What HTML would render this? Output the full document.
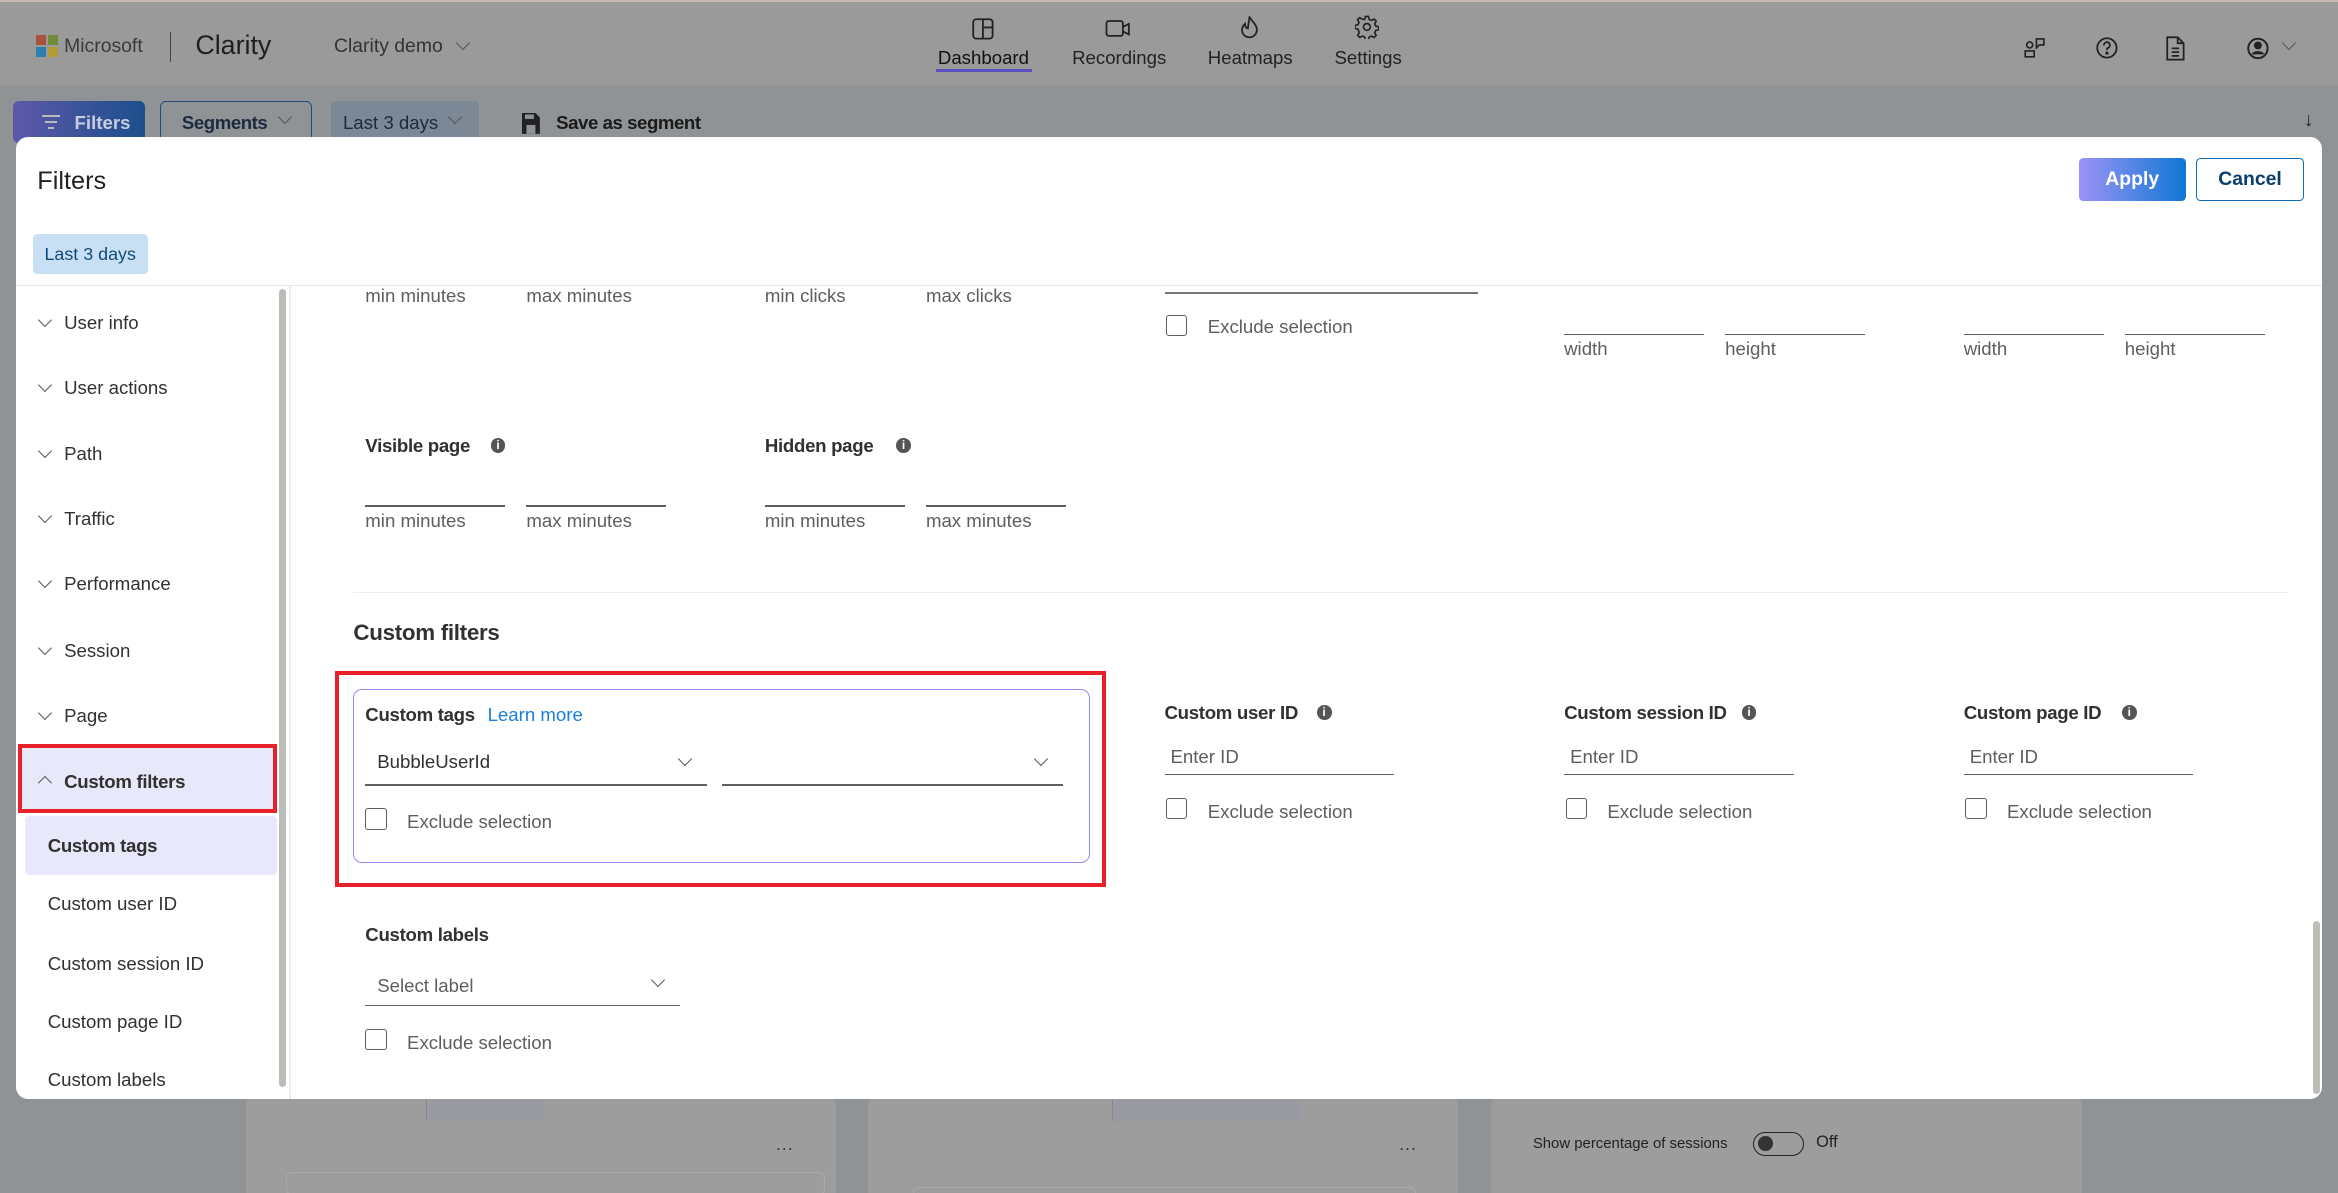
<!DOCTYPE html>
<html><head><meta charset="utf-8">
<style>
html,body{margin:0;padding:0;overflow:hidden;}
body{width:1568px;height:800px;zoom:1.49107;font-family:"Liberation Sans",sans-serif;background:#8f9396;position:relative;color:#323130;}
.a{position:absolute;white-space:nowrap;}
.hdr{position:absolute;left:0;top:0;width:1568px;height:57px;background:#9a9a9a;border-top:2px solid #c9b9b2;box-sizing:border-box;}
.modal{position:absolute;left:11px;top:92px;width:1546px;height:645px;background:#fff;border-radius:8px;overflow:hidden;}
.lbl{font-size:12.5px;color:#605e5c;}
.ul{position:absolute;height:1px;background:#605e5c;}
.cb{position:absolute;width:13px;height:13px;border:1px solid #605e5c;border-radius:2px;background:#fff;}
.b{font-weight:bold;font-size:12.5px;color:#323130;letter-spacing:-0.2px;}
.info{display:inline-block;width:10px;height:10px;border-radius:50%;background:#555;color:#fff;font-size:8px;text-align:center;line-height:10px;font-weight:bold;vertical-align:1px;}
.chev{position:absolute;width:6px;height:6px;border-right:1px solid #555;border-bottom:1px solid #555;transform:rotate(45deg);}
.side{font-size:12.5px;color:#323130;}
.card{position:absolute;background:#9d9d9d;border-radius:6px;}
</style></head><body>
<div class="hdr">
  <div class="a" style="left:24px;top:22px;width:7px;height:7px;background:#a8523c"></div>
  <div class="a" style="left:32px;top:22px;width:7px;height:7px;background:#6f8a3a"></div>
  <div class="a" style="left:24px;top:30px;width:7px;height:7px;background:#2e7fb0"></div>
  <div class="a" style="left:32px;top:30px;width:7px;height:7px;background:#b29a36"></div>
  <div class="a" style="left:43px;top:22px;font-size:13px;color:#3a3a3a">Microsoft</div>
  <div class="a" style="left:114px;top:20px;width:1px;height:20px;background:#444"></div>
  <div class="a" style="left:131px;top:19px;font-size:18px;color:#1f1f1f">Clarity</div>
  <div class="a" style="left:224px;top:22px;font-size:13px;color:#333">Clarity demo</div>
  <div class="chev" style="left:307px;top:24px"></div>
  <svg class="a" style="left:651px;top:10px" width="16" height="16" viewBox="0 0 16 16" fill="none" stroke="#222" stroke-width="1.2"><rect x="1.5" y="1.5" width="13" height="13" rx="2"/><path d="M8 1.5v13M8 7h6.5"/></svg>
  <div class="a" style="left:629px;top:30px;font-size:12.5px;color:#111">Dashboard</div>
  <div class="a" style="left:628px;top:45px;width:64px;height:2px;background:#5b4ec0"></div>
  <svg class="a" style="left:741px;top:11px" width="18" height="14" viewBox="0 0 18 14" fill="none" stroke="#222" stroke-width="1.2"><rect x="1" y="2" width="11" height="10" rx="1.5"/><path d="M12 6l4-2v7l-4-2"/></svg>
  <div class="a" style="left:719px;top:30px;font-size:12.5px;color:#222">Recordings</div>
  <svg class="a" style="left:831px;top:9px" width="14" height="16" viewBox="0 0 14 16" fill="none" stroke="#222" stroke-width="1.2"><path d="M7 1c1 3 5 5 5 9a5 5 0 0 1-10 0c0-2 1-3 2-4 0 2 1 3 2 3 0-3 1-5 1-8z"/></svg>
  <div class="a" style="left:810px;top:30px;font-size:12.5px;color:#222">Heatmaps</div>
  <svg class="a" style="left:909px;top:9px" width="16" height="16" viewBox="0 0 16 16" fill="none" stroke="#222" stroke-width="1.1"><circle cx="8" cy="8" r="2.3"/><path d="M7 1h2l.5 2 1.5.7 1.8-1 1.4 1.4-1 1.8.7 1.5 2 .5v2l-2 .5-.7 1.5 1 1.8-1.4 1.4-1.8-1-1.5.7-.5 2H7l-.5-2-1.5-.7-1.8 1-1.4-1.4 1-1.8L2.1 9.5 0 9V7l2-.5.7-1.5-1-1.8 1.4-1.4 1.8 1L6.5 3z"/></svg>
  <div class="a" style="left:895px;top:30px;font-size:12.5px;color:#222">Settings</div>
  <svg class="a" style="left:1357px;top:23px" width="18" height="16" viewBox="0 0 18 16" fill="none" stroke="#222" stroke-width="1.1"><circle cx="4.5" cy="6" r="2"/><path d="M1.5 10h6v4h-6z"/><path d="M9 2h5v4h-3l-2 2z"/></svg>
  <svg class="a" style="left:1405px;top:23px" width="16" height="16" viewBox="0 0 16 16" fill="none" stroke="#222" stroke-width="1.2"><circle cx="8" cy="8" r="6.5"/><path d="M6 6.3a2 2 0 1 1 2.5 1.8c-.5.2-.5.6-.5 1.4"/><circle cx="8" cy="11.5" r=".5" fill="#222"/></svg>
  <svg class="a" style="left:1452px;top:22px" width="14" height="18" viewBox="0 0 14 18" fill="none" stroke="#222" stroke-width="1.2"><path d="M1.5 1.5h7l4 4v11h-11z"/><path d="M8.5 1.5v4h4M4.5 9h5M4.5 11.5h5M4.5 14h5"/></svg>
  <svg class="a" style="left:1506px;top:22px" width="16" height="18" viewBox="0 0 16 18" fill="none" stroke="#222" stroke-width="1.3"><circle cx="8" cy="9" r="6.5"/><circle cx="8" cy="7" r="2" fill="#222"/><path d="M4.5 13c1-2 6-2 7 0" fill="#222"/></svg>
  <div class="chev" style="left:1532px;top:24px"></div>
</div>
<div class="a" style="left:9px;top:68px;width:88px;height:28px;border-radius:4px;background:linear-gradient(90deg,#5d58a8,#1c4f8c)"></div>
<div class="a" style="left:28px;top:77px;width:12px;height:1.5px;background:#bbb"></div>
<div class="a" style="left:30px;top:81px;width:8px;height:1.5px;background:#bbb"></div>
<div class="a" style="left:32px;top:85px;width:4px;height:1.5px;background:#bbb"></div>
<div class="a" style="left:50px;top:75px;font-size:12.5px;color:#c8cce0;font-weight:bold">Filters</div>
<div class="a" style="left:107px;top:68px;width:102px;height:28px;border:1px solid #274a7a;border-radius:4px;box-sizing:border-box"></div>
<div class="a" style="left:122px;top:75px;font-size:12.5px;color:#1c2a40;font-weight:bold;letter-spacing:-0.3px">Segments</div>
<div class="chev" style="left:188px;top:75px"></div>
<div class="a" style="left:222px;top:68px;width:99px;height:28px;background:#7c8895;border-radius:3px"></div>
<div class="a" style="left:230px;top:75px;font-size:12.5px;color:#1c2a40">Last 3 days</div>
<div class="chev" style="left:302px;top:75px"></div>
<svg class="a" style="left:350px;top:76px" width="12" height="14" viewBox="0 0 12 14"><path d="M0 0h9l3 3v11H0z" fill="#222"/><rect x="2" y="1" width="6" height="3" fill="#8f9396"/><rect x="3" y="8" width="6" height="6" fill="#8f9396"/></svg>
<div class="a" style="left:373px;top:75px;font-size:12.5px;color:#1a1a1a;font-weight:bold;letter-spacing:-0.3px">Save as segment</div>
<div class="a" style="left:1545px;top:73px;font-size:13px;color:#222">↓</div>
<div class="card" style="left:165px;top:735px;width:396px;height:70px"></div>
<div class="card" style="left:582px;top:735px;width:396px;height:70px"></div>
<div class="card" style="left:1000px;top:735px;width:396px;height:70px"></div>
<div class="a" style="left:286px;top:730px;width:78px;height:22px;background:#9a9aa2;border-left:1px solid #888"></div>
<div class="a" style="left:746px;top:730px;width:126px;height:22px;background:#9a9aa2;border-left:1px solid #888"></div>
<div class="a" style="left:520px;top:763px;font-size:12px;color:#333">···</div>
<div class="a" style="left:938px;top:763px;font-size:12px;color:#333">···</div>
<div class="a" style="left:1028px;top:762px;font-size:10px;color:#222">Show percentage of sessions</div>
<div class="a" style="left:1176px;top:759px;width:34px;height:16px;border:1px solid #222;border-radius:9px;box-sizing:border-box"></div>
<div class="a" style="left:1179px;top:762px;width:10px;height:10px;border-radius:50%;background:#333"></div>
<div class="a" style="left:1218px;top:760px;font-size:11px;color:#222">Off</div>
<div class="a" style="left:192px;top:786px;width:360px;height:14px;border:1px solid #aaa;border-radius:4px"></div>
<div class="a" style="left:612px;top:796px;width:336px;height:14px;border:1px solid #aaa;border-radius:4px"></div>

<div class="modal">
  <div class="a" style="left:14px;top:20px;font-size:17px;color:#222">Filters</div>
  <div class="a" style="left:1383px;top:14px;width:72px;height:29px;border-radius:3px;background:linear-gradient(90deg,#9b93f6,#0f78d4);color:#fff;font-weight:bold;font-size:13px;text-align:center;line-height:29px">Apply</div>
  <div class="a" style="left:1462px;top:14px;width:72px;height:29px;box-sizing:border-box;border:1px solid #0f6cbd;border-radius:3px;color:#0b3e6e;font-weight:bold;font-size:13px;text-align:center;line-height:27px">Cancel</div>
  <div class="a" style="left:11px;top:65px;width:77px;height:27px;background:#c9e0f4;border-radius:3px;color:#114a7a;font-size:12px;text-align:center;line-height:27px">Last 3 days</div>
  <div class="a" style="left:0;top:99px;width:1546px;height:1px;background:#e6e6e6"></div>
  <div class="a" style="left:183px;top:100px;width:1px;height:545px;background:#eee"></div>
  <div class="a" style="left:176px;top:102px;width:5px;height:535px;background:#bdbdb8;border-radius:3px"></div>
  <div class="a" style="left:1540px;top:526px;width:5px;height:116px;background:#bdbdb8;border-radius:3px"></div>
  <div class="chev" style="left:16px;top:119px"></div><div class="a side" style="left:32px;top:117px">User info</div>
  <div class="chev" style="left:16px;top:163px"></div><div class="a side" style="left:32px;top:161px">User actions</div>
  <div class="chev" style="left:16px;top:207px"></div><div class="a side" style="left:32px;top:205px">Path</div>
  <div class="chev" style="left:16px;top:251px"></div><div class="a side" style="left:32px;top:249px">Traffic</div>
  <div class="chev" style="left:16px;top:294px"></div><div class="a side" style="left:32px;top:292px">Performance</div>
  <div class="chev" style="left:16px;top:339px"></div><div class="a side" style="left:32px;top:337px">Session</div>
  <div class="chev" style="left:16px;top:383px"></div><div class="a side" style="left:32px;top:381px">Page</div>
  <div class="a" style="left:1px;top:407px;width:174px;height:46px;background:#e8e8fb;border:3px solid #e8202a;box-sizing:border-box"></div>
  <div class="chev" style="left:16px;top:430px;transform:rotate(-135deg)"></div>
  <div class="a side" style="left:32px;top:425px;font-weight:bold;letter-spacing:-0.2px">Custom filters</div>
  <div class="a" style="left:6px;top:455px;width:169px;height:40px;background:#e8e8fb;border-radius:3px"></div>
  <div class="a side" style="left:21px;top:468px;font-weight:bold;letter-spacing:-0.2px">Custom tags</div>
  <div class="a side" style="left:21px;top:507px">Custom user ID</div>
  <div class="a side" style="left:21px;top:547px">Custom session ID</div>
  <div class="a side" style="left:21px;top:586px">Custom page ID</div>
  <div class="a side" style="left:21px;top:625px">Custom labels</div>
  <div class="a lbl" style="left:234px;top:99px">min minutes</div>
  <div class="a lbl" style="left:342px;top:99px">max minutes</div>
  <div class="a lbl" style="left:502px;top:99px">min clicks</div>
  <div class="a lbl" style="left:610px;top:99px">max clicks</div>
  <div class="ul" style="left:770px;top:104px;width:210px;background:#777"></div>
  <div class="cb" style="left:771px;top:119px"></div>
  <div class="a lbl" style="left:799px;top:120px">Exclude selection</div>
  <div class="ul" style="left:1038px;top:132px;width:94px"></div>
  <div class="ul" style="left:1146px;top:132px;width:94px"></div>
  <div class="a lbl" style="left:1038px;top:135px">width</div>
  <div class="a lbl" style="left:1146px;top:135px">height</div>
  <div class="ul" style="left:1306px;top:132px;width:94px"></div>
  <div class="ul" style="left:1414px;top:132px;width:94px"></div>
  <div class="a lbl" style="left:1306px;top:135px">width</div>
  <div class="a lbl" style="left:1414px;top:135px">height</div>
  <div class="a b" style="left:234px;top:200px">Visible page</div><div class="a info" style="left:318px;top:202px">i</div>
  <div class="a b" style="left:502px;top:200px">Hidden page</div><div class="a info" style="left:590px;top:202px">i</div>
  <div class="ul" style="left:234px;top:247px;width:94px"></div>
  <div class="ul" style="left:342px;top:247px;width:94px"></div>
  <div class="ul" style="left:502px;top:247px;width:94px"></div>
  <div class="ul" style="left:610px;top:247px;width:94px"></div>
  <div class="a lbl" style="left:234px;top:250px">min minutes</div>
  <div class="a lbl" style="left:342px;top:250px">max minutes</div>
  <div class="a lbl" style="left:502px;top:250px">min minutes</div>
  <div class="a lbl" style="left:610px;top:250px">max minutes</div>
  <div class="a" style="left:226px;top:305px;width:1298px;height:1px;background:#eee"></div>
  <div class="a" style="left:226px;top:324px;font-size:15px;font-weight:bold;color:#323130;letter-spacing:-0.2px">Custom filters</div>
  <div class="a" style="left:214px;top:358px;width:517px;height:145px;border:3px solid #e8202a;box-sizing:border-box"></div>
  <div class="a" style="left:226px;top:370px;width:494px;height:117px;border:1px solid #8f8cf5;border-radius:6px;box-sizing:border-box"></div>
  <div class="a b" style="left:234px;top:380px">Custom tags</div>
  <div class="a" style="left:316px;top:380px;font-size:12.5px;color:#1a7fd8">Learn more</div>
  <div class="a" style="left:242px;top:412px;font-size:12.5px;color:#323130">BubbleUserId</div>
  <div class="chev" style="left:445px;top:414px"></div>
  <div class="ul" style="left:234px;top:434px;width:229px"></div>
  <div class="chev" style="left:684px;top:414px"></div>
  <div class="ul" style="left:473px;top:434px;width:229px"></div>
  <div class="cb" style="left:234px;top:450px"></div>
  <div class="a lbl" style="left:262px;top:452px">Exclude selection</div>
  <div class="a b" style="left:770px;top:379px">Custom user ID</div><div class="a info" style="left:872px;top:381px">i</div>
  <div class="a lbl" style="left:774px;top:408px">Enter ID</div>
  <div class="ul" style="left:770px;top:427px;width:154px"></div>
  <div class="cb" style="left:771px;top:443px"></div><div class="a lbl" style="left:799px;top:445px">Exclude selection</div>
  <div class="a b" style="left:1038px;top:379px">Custom session ID</div><div class="a info" style="left:1157px;top:381px">i</div>
  <div class="a lbl" style="left:1042px;top:408px">Enter ID</div>
  <div class="ul" style="left:1038px;top:427px;width:154px"></div>
  <div class="cb" style="left:1039px;top:443px"></div><div class="a lbl" style="left:1067px;top:445px">Exclude selection</div>
  <div class="a b" style="left:1306px;top:379px">Custom page ID</div><div class="a info" style="left:1412px;top:381px">i</div>
  <div class="a lbl" style="left:1310px;top:408px">Enter ID</div>
  <div class="ul" style="left:1306px;top:427px;width:154px"></div>
  <div class="cb" style="left:1307px;top:443px"></div><div class="a lbl" style="left:1335px;top:445px">Exclude selection</div>
  <div class="a b" style="left:234px;top:528px">Custom labels</div>
  <div class="a lbl" style="left:242px;top:562px">Select label</div>
  <div class="chev" style="left:427px;top:562px"></div>
  <div class="ul" style="left:234px;top:582px;width:211px"></div>
  <div class="cb" style="left:234px;top:598px"></div>
  <div class="a lbl" style="left:262px;top:600px">Exclude selection</div>
</div>
</body></html>
